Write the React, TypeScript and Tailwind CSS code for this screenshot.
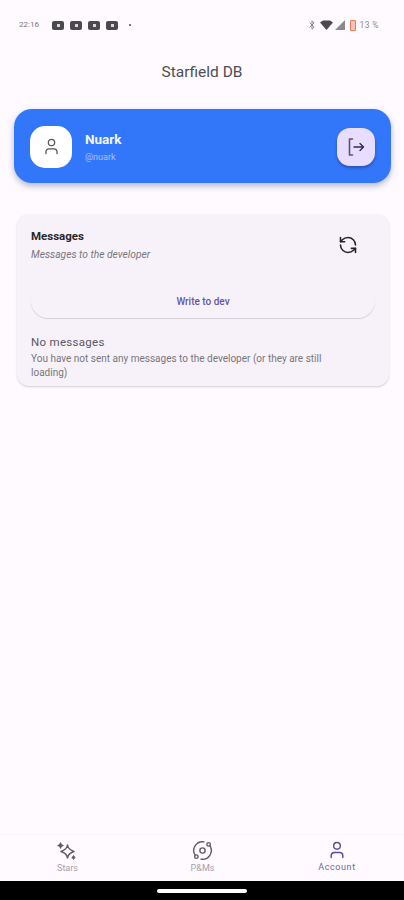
import React from 'react';
import { Orbit, RefreshCcw, User, Bluetooth } from 'lucide-react';

const StarsIcon = () => (
  <svg width="20" height="20" viewBox="0 0 20 20" fill="none" stroke="currentColor" strokeWidth="1.5" strokeLinejoin="round">
    <path d="M10.5 4 C11 7.5 12.5 9 17 10.5 C12.5 12 11 13.5 10.5 17 C10 13.5 8.5 12 4 10.5 C8.5 9 10 7.5 10.5 4 Z" />
    <path d="M3.5 1 L4.8 3.2 L7 4.5 L4.8 5.8 L3.5 8 L2.2 5.8 L0 4.5 L2.2 3.2 Z" fill="currentColor" stroke="none" />
    <path d="M16.5 14.5 L18 16.5 L16.5 18.5 L15 16.5 Z" fill="currentColor" stroke="currentColor" strokeWidth="0.8" />
  </svg>
);

const ExitIcon = () => (
  <svg width="20" height="20" viewBox="0 0 20 20" fill="none" strokeLinecap="round" strokeLinejoin="round">
    <path d="M6.5 2 H3.5 V18 H6.5" stroke="#5a5568" strokeWidth="1.6" />
    <path d="M8 10 H17.5 M14 6.5 L17.5 10 L14 13.5" stroke="#352a55" strokeWidth="1.4" />
  </svg>
);

const NavItem = ({ icon, label, active }: { icon: React.ReactNode; label: string; active?: boolean }) => (
  <div className={`flex flex-col items-center ${active ? 'text-[#5b4a9e]' : 'text-[#5f5c64]'}`}>
    {icon}
    <span className={`leading-[12px] mt-[1px] ${active ? 'text-[9px] tracking-[0.6px] text-[#6f6a90]' : 'text-[9px] text-[#a3a0a8]'}`}>{label}</span>
  </div>
);

const VideoBadge = () => (
  <div className="w-3 h-[9px] rounded-[2px] bg-[#4a4a4c] flex items-center justify-center">
    <div className="w-[3px] h-[3px] bg-[#d8d8d8]" />
  </div>
);

export default function App() {
  return (
    <div className="h-[900px] w-[404px] bg-[#fefaff] flex flex-col overflow-hidden font-['Roboto',sans-serif]">
      {/* status bar */}
      <div className="h-[50px] flex items-start justify-between pt-[19px] pl-[19px] pr-[25px] shrink-0">
        <div className="flex items-center h-[12px]">
          <span className="text-[8px] text-[#77767a] w-[33px]">22:16</span>
          <div className="flex gap-[6px]">
            <VideoBadge />
            <VideoBadge />
            <VideoBadge />
            <VideoBadge />
          </div>
          <div className="w-[2px] h-[2px] rounded-full bg-[#4a4a4c] ml-[11px]" />
        </div>
        <div className="flex items-center h-[12px] gap-[2px]">
          <Bluetooth size={10} className="text-[#77767a]" />
          <svg width="13" height="10" viewBox="0 0 13 10" className="ml-[1px]">
            <path d="M0 2.5 L3 0.5 H10 L13 2.5 L6.5 10 Z" fill="#4a4a4c" />
          </svg>
          <svg width="10" height="10" viewBox="0 0 10 10">
            <path d="M10 0 V10 H0 Z" fill="#8b8b8e" />
          </svg>
          <div className="ml-[3px] w-[6px] h-[11px] rounded-[1px] border border-[#e8795a] bg-[#f6c4b4]" />
          <span className="text-[8.5px] text-[#8b8b8e] ml-[2px] tracking-[0.4px]">13 %</span>
        </div>
      </div>

      {/* title */}
      <div className="h-[42px] flex items-center justify-center shrink-0">
        <span className="text-[15.5px] text-[#4f4d52] mt-[3px]">Starfield DB</span>
      </div>

      <div className="pt-[17px] pl-[14px] pr-[13px] shrink-0">
        <div className="h-[74px] rounded-[18px] bg-[#3276fa] shadow-[0_3px_6px_rgba(40,60,110,0.35)] flex items-center pl-4 pr-4">
          <div className="w-[42px] h-[42px] rounded-[15px] bg-white flex items-center justify-center mt-[1px]">
            <User size={19} strokeWidth={1.6} className="text-[#55535a]" />
          </div>
          <div className="ml-[13px] flex-1 flex flex-col mt-[2px]">
            <span className="text-[13.5px] leading-[16px] font-bold text-[#f4f6ff]">Nuark</span>
            <span className="text-[9px] leading-[12px] mt-[4px] text-[#a9c4fb]">@nuark</span>
          </div>
          <div className="w-[38px] h-[38px] rounded-[13px] bg-[#e9ddff] shadow-[0_2px_3px_rgba(30,40,90,0.45)] flex items-center justify-center mt-[1px]">
            <ExitIcon />
          </div>
        </div>
      </div>

      <div className="pt-[31px] pl-[17px] pr-[15px] shrink-0">
        <div className="h-[172px] rounded-[12px] bg-[#f7f2fa] shadow-[0_1px_2px_rgba(0,0,0,0.18)] px-[14px] flex flex-col">
          <div className="flex justify-between pt-[15px] h-[70px] shrink-0">
            <div className="flex flex-col">
              <span className="text-[11.5px] leading-[14px] font-bold text-[#29272b]">Messages</span>
              <span className="text-[10.25px] leading-[12px] mt-[6px] italic text-[#78767b]">Messages to the developer</span>
            </div>
            <RefreshCcw size={20} strokeWidth={1.9} className="text-[#27252a] mr-[17px] mt-[6px]" />
          </div>
          <div className="h-[34px] rounded-[17px] shadow-[0_1px_1px_rgba(0,0,0,0.14)] flex items-center justify-center shrink-0">
            <span className="text-[10px] font-medium text-[#6656a5] mt-[1px]">Write to dev</span>
          </div>
          <span className="text-[11.5px] leading-[14px] mt-[17px] text-[#5a585d] tracking-[0.3px]">No messages</span>
          <span className="text-[10px] leading-[14px] mt-[3px] text-[#78767b] max-w-[310px]">You have not sent any messages to the developer (or they are still loading)</span>
        </div>
      </div>

      <div className="flex-1" />

      {/* bottom nav */}
      <div className="h-[47px] flex shrink-0 bg-[#fffaff] border-t border-[#f9f3fb]">
        <div className="w-[135px] flex justify-center pt-[6px]">
          <NavItem icon={<StarsIcon />} label="Stars" />
        </div>
        <div className="w-[135px] flex justify-center pt-[5px]">
          <NavItem icon={<Orbit size={21} strokeWidth={1.6} />} label="P&Ms" />
        </div>
        <div className="w-[134px] flex justify-center pt-[5px]">
          <NavItem icon={<User size={20} strokeWidth={1.7} />} label="Account" active />
        </div>
      </div>
      <div className="h-[19px] bg-black flex items-center justify-center shrink-0">
        <div className="w-[90px] h-[4px] rounded-full bg-white" />
      </div>
    </div>
  );
}
